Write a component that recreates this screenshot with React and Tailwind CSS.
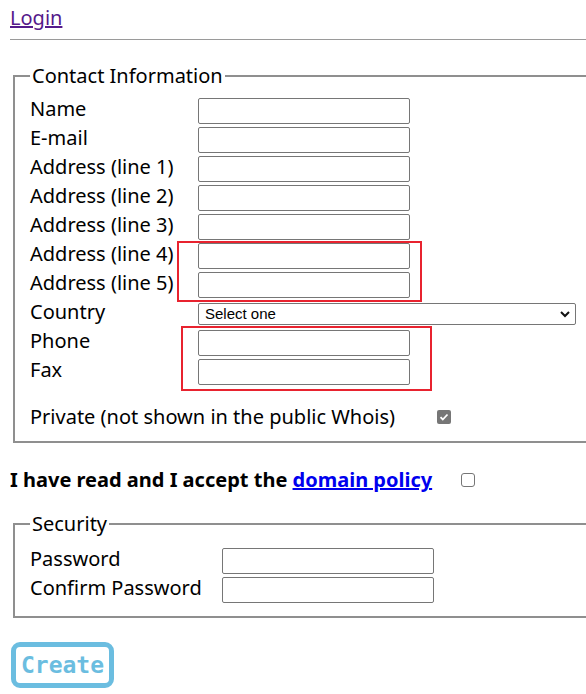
import React from "react";

const contactRows = [
  "Name",
  "E-mail",
  "Address (line 1)",
  "Address (line 2)",
  "Address (line 3)",
  "Address (line 4)",
  "Address (line 5)",
];

const TextInput = ({ w = "w-[212px]" }) => (
  <input
    type="text"
    className={`${w} h-[26px] border border-[#767676] rounded-[2px] bg-white`}
  />
);

const Row = ({ label, labelW, children }) => (
  <div className="flex items-center h-[29px]">
    <span className={`${labelW} shrink-0 whitespace-nowrap pb-[4px]`}>{label}</span>
    {children}
  </div>
);

const App = () => {
  return (
    <div className="relative w-[586px] h-[694px] overflow-hidden bg-white text-black text-[20px] leading-[26px] font-['Noto_Sans','Open_Sans',sans-serif]">
      <div className="w-[640px]">
        <div className="pl-[10px] pt-[5px]">
          <a href="#" className="text-[#551a8b] underline">
            Login
          </a>
        </div>
        <div className="ml-[10px] mt-[8px] h-px bg-[#9a9a9a]" />

        {/* contact information */}
        <fieldset className="ml-[13px] mt-[23px] border-2 border-[#8f8f8f] pl-[15px] pr-2 pb-[10px]">
          <legend className="px-[2px]">Contact Information</legend>
          <div className="pt-[7px]">
            {contactRows.map((label) => (
              <Row key={label} label={label} labelW="w-[168px]">
                <TextInput />
              </Row>
            ))}
            <Row label="Country" labelW="w-[168px]">
              <div className="relative w-[378px] h-[22px] border border-[#767676] rounded-[2px] flex items-center pl-[6px] text-[15px] font-['Liberation_Sans',sans-serif]">
                Select one
                <svg
                  className="absolute right-[5px] top-[6px]"
                  width="10"
                  height="8"
                  viewBox="0 0 10 8"
                  fill="none"
                >
                  <path d="M1 2l4 4 4-4" stroke="#111" strokeWidth="2" />
                </svg>
              </div>
            </Row>
            <Row label="Phone" labelW="w-[168px]">
              <TextInput />
            </Row>
            <Row label="Fax" labelW="w-[168px]">
              <TextInput />
            </Row>
            <div className="flex items-center h-[29px] mt-[16px]">
              <span className="whitespace-nowrap">Private (not shown in the public Whois)</span>
              <span className="ml-[42px] w-[14px] h-[14px] rounded-[2px] bg-[#767676] flex items-center justify-center">
                <svg width="10" height="10" viewBox="0 0 10 10" fill="none">
                  <path d="M1.5 5.2l2.3 2.3L8.5 2.5" stroke="#fff" strokeWidth="1.8" />
                </svg>
              </span>
            </div>
          </div>
        </fieldset>

        {/* policy */}
        <div className="flex items-center pl-[10px] mt-[22px] h-[30px]">
          <span className="font-bold whitespace-nowrap">
            I have read and I accept the{" "}
            <a href="#" className="text-[#0000ee] underline">
              domain policy
            </a>
          </span>
          <span className="ml-[29px] w-[14px] h-[14px] rounded-[3px] border border-[#767676] bg-white" />
        </div>

        {/* security */}
        <fieldset className="ml-[13px] mt-[16px] border-2 border-[#8f8f8f] pl-[15px] pr-2 pb-[12px]">
          <legend className="px-[2px]">Security</legend>
          <div className="pt-[9px]">
            <Row label="Password" labelW="w-[192px]">
              <TextInput />
            </Row>
            <Row label="Confirm Password" labelW="w-[192px]">
              <TextInput />
            </Row>
          </div>
        </fieldset>

        <div className="pl-[11px] mt-[24px]">
          <button className="w-[103px] h-[46px] border-[5px] border-[#6bbde0] rounded-[9px] bg-white text-[#6bbde0] font-bold text-[23px] font-['DejaVu_Sans_Mono',monospace] flex items-center justify-center">
            Create
          </button>
        </div>
      </div>

      {/* annotation boxes */}
      <div className="absolute left-[177px] top-[241px] w-[245px] h-[61px] border-2 border-[#e8232f] pointer-events-none" />
      <div className="absolute left-[181px] top-[326px] w-[251px] h-[65px] border-2 border-[#e8232f] pointer-events-none" />
    </div>
  );
};

export default App;
